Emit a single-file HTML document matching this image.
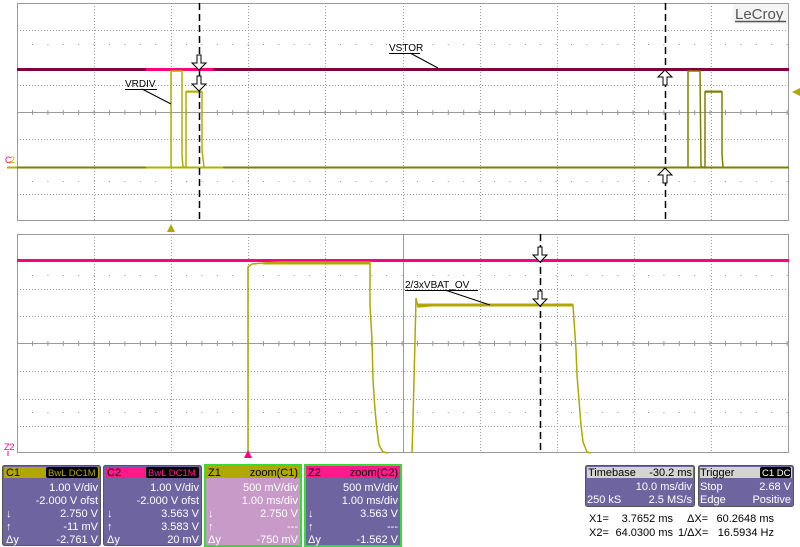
<!DOCTYPE html>
<html><head><style>
body{margin:0;background:#fff;width:800px;height:547px;overflow:hidden;font-family:"Liberation Sans",sans-serif}
svg{display:block}
text{font-family:"Liberation Sans",sans-serif}
</style></head><body>
<svg width="800" height="547" viewBox="0 0 800 547" xmlns="http://www.w3.org/2000/svg">
<!-- TOP GRID -->
<g stroke="#999" stroke-width="1" fill="none">
<rect x="17.5" y="3.5" width="771" height="217"/>
<line x1="17" y1="112.5" x2="789" y2="112.5"/>
<g stroke-dasharray="1,2">
<line x1="17" y1="30.5" x2="789" y2="30.5"/><line x1="17" y1="85.5" x2="789" y2="85.5"/>
<line x1="17" y1="139.5" x2="789" y2="139.5"/><line x1="17" y1="194.5" x2="789" y2="194.5"/>
<line x1="94.5" y1="3" x2="94.5" y2="221"/><line x1="171.5" y1="3" x2="171.5" y2="221"/>
<line x1="248.5" y1="3" x2="248.5" y2="221"/><line x1="325.5" y1="3" x2="325.5" y2="221"/>
<line x1="403.5" y1="3" x2="403.5" y2="221"/><line x1="480.5" y1="3" x2="480.5" y2="221"/>
<line x1="557.5" y1="3" x2="557.5" y2="221"/><line x1="634.5" y1="3" x2="634.5" y2="221"/>
<line x1="711.5" y1="3" x2="711.5" y2="221"/>
</g>
<g stroke-dasharray="1,14.4" stroke-dashoffset="-15">
<line x1="17" y1="44.5" x2="789" y2="44.5"/><line x1="17" y1="181.5" x2="789" y2="181.5"/>
<line x1="17" y1="112.5" x2="789" y2="112.5" stroke-width="5"/>
</g>
</g>
<!-- top traces -->
<line x1="17" y1="69.5" x2="789" y2="69.5" stroke="#800040" stroke-width="3"/>
<line x1="146" y1="69.5" x2="213" y2="69.5" stroke="#ff0080" stroke-width="3"/>
<line x1="17" y1="167.5" x2="789" y2="167.5" stroke="#808000" stroke-width="2"/>
<line x1="146" y1="167.5" x2="223" y2="167.5" stroke="#b0b000" stroke-width="2"/>
<polyline fill="none" stroke="#b0b000" stroke-width="1.5" points="171,167 171,71 182,71 182,156 183,167 186,167 186,92 202,92 202,150 204,167"/>
<polyline fill="none" stroke="#808000" stroke-width="1.5" points="688,167 688,71 700,71 701,167 705,167 705,92 722,92 722,155 723,167"/>
<line x1="186" y1="91.5" x2="202" y2="91.5" stroke="#b0b000" stroke-width="2"/>
<line x1="705" y1="91.5" x2="722" y2="91.5" stroke="#808000" stroke-width="2"/>
<line x1="7" y1="167.5" x2="17" y2="167.5" stroke="#b0b000" stroke-width="2"/>
<text x="5" y="163" font-size="9" fill="#ff0080">C</text><text x="10" y="163" font-size="9" fill="#b0b000">2</text>
<polygon points="792,92 800,88 800,96" fill="#b0a800"/>
<polygon points="167,232 171,224 175,232" fill="#b0a800"/>
<!-- cursors top -->
<g stroke="#000" stroke-width="1.5" stroke-dasharray="7,4">
<line x1="199.5" y1="3" x2="199.5" y2="221"/><line x1="665.5" y1="3" x2="665.5" y2="221"/>
</g>
<g fill="#fff" stroke="#000" stroke-width="1">
<path d="M197,55 h4 v8 h5 l-7,7 l-7,-7 h5z"/>
<path d="M197,76 h4 v8 h5 l-7,7 l-7,-7 h5z"/>
<path d="M663,85 h4 v-8 h5 l-7,-7 l-7,7 h5z"/>
<path d="M663,183 h4 v-8 h5 l-7,-7 l-7,7 h5z"/>
</g>
<text x="125" y="87" font-size="10">VRDIV</text>
<line x1="125" y1="89.5" x2="157" y2="89.5" stroke="#000"/>
<line x1="142" y1="89" x2="171" y2="104" stroke="#000"/>
<text x="389" y="51" font-size="10">VSTOR</text>
<line x1="389" y1="53.5" x2="420" y2="53.5" stroke="#000"/>
<line x1="410" y1="53" x2="438" y2="68" stroke="#000"/>
<rect x="733" y="4" width="55" height="20" fill="#f4f4f4"/>
<text x="735" y="19" font-size="15" fill="#555">LeCroy</text>
<line x1="735" y1="21.5" x2="786" y2="21.5" stroke="#555" stroke-width="1.5"/>

<!-- BOTTOM GRID -->
<g stroke="#999" stroke-width="1" fill="none">
<rect x="17.5" y="234.5" width="771" height="218"/>
<line x1="17" y1="343.5" x2="789" y2="343.5"/>
<line x1="403.5" y1="234" x2="403.5" y2="453"/>
<g stroke-dasharray="1,2">
<line x1="17" y1="289.5" x2="789" y2="289.5"/><line x1="17" y1="316.5" x2="789" y2="316.5"/>
<line x1="17" y1="371.5" x2="789" y2="371.5"/><line x1="17" y1="399.5" x2="789" y2="399.5"/>
<line x1="17" y1="426.5" x2="789" y2="426.5"/>
<line x1="94.5" y1="234" x2="94.5" y2="453"/><line x1="171.5" y1="234" x2="171.5" y2="453"/>
<line x1="248.5" y1="234" x2="248.5" y2="453"/><line x1="325.5" y1="234" x2="325.5" y2="453"/>
<line x1="480.5" y1="234" x2="480.5" y2="453"/>
<line x1="557.5" y1="234" x2="557.5" y2="453"/><line x1="634.5" y1="234" x2="634.5" y2="453"/>
<line x1="711.5" y1="234" x2="711.5" y2="453"/>
</g>
<g stroke-dasharray="1,14.4" stroke-dashoffset="-15">
<line x1="17" y1="275.5" x2="789" y2="275.5"/><line x1="17" y1="412.5" x2="789" y2="412.5"/>
<line x1="17" y1="343.5" x2="789" y2="343.5" stroke-width="5"/>
</g>
</g>
<line x1="17" y1="260.5" x2="789" y2="260.5" stroke="#ff0080" stroke-width="3"/>
<polyline fill="none" stroke="#b0a800" stroke-width="1.5" points="248,453 248,267 252,264 263,263 280,262 370,262 370,305 372,340 373,380 375,410 377,430 379,445 383,452 388,453"/>
<line x1="263" y1="263.5" x2="370" y2="263.5" stroke="#b0a800" stroke-width="2"/>
<polyline fill="none" stroke="#b0a800" stroke-width="1.5" points="412,453 413,420 414,380 415,340 416,298 418,307 440,305 573,305 574,320 576,350 577,375 579,400 581,425 583,442 587,452 591,453"/>
<line x1="418" y1="305" x2="573" y2="305" stroke="#b0a800" stroke-width="3"/>
<polygon points="244,458 248,450 252,458" fill="#ff0080"/>
<text x="4" y="450" font-size="9" fill="#ff0080">Z2</text>
<line x1="8" y1="451" x2="8" y2="456" stroke="#ff0080"/>
<line x1="540.5" y1="234" x2="540.5" y2="453" stroke="#000" stroke-width="1.5" stroke-dasharray="7,4"/>
<g fill="#fff" stroke="#000" stroke-width="1">
<path d="M538,247 h4 v8 h5 l-7,7 l-7,-7 h5z"/>
<path d="M538,291 h4 v8 h5 l-7,7 l-7,-7 h5z"/>
</g>
<text x="405" y="288" font-size="10">2/3xVBAT_OV</text>
<line x1="405" y1="290.5" x2="478" y2="290.5" stroke="#000"/>
<line x1="445" y1="290" x2="490" y2="305" stroke="#000"/>

<!-- INFO PANELS -->
<g font-size="11" fill="#fff">
<rect x="2.5" y="465.5" width="98" height="80" rx="2" fill="#6e65a0" stroke="#555"/>
<rect x="4" y="467" width="95" height="11" fill="#b0a800"/>
<text x="6" y="476" fill="#000">C1</text>
<rect x="46" y="467" width="52" height="11" rx="2" fill="#000"/>
<text x="48" y="476" fill="#b0a800" font-size="9.5">BwL DC1M</text>
<g text-anchor="end"><text x="98" y="491">1.00 V/div</text><text x="98" y="504">-2.000 V ofst</text><text x="98" y="517">2.750 V</text><text x="98" y="530">-11 mV</text><text x="98" y="543">-2.761 V</text></g>
<text x="6" y="517">↓</text><text x="6" y="530">↑</text><text x="6" y="543">Δy</text>
<rect x="103.5" y="465.5" width="98" height="80" rx="2" fill="#6e65a0" stroke="#555"/>
<rect x="105" y="467" width="95" height="11" fill="#ff1a8c"/>
<text x="107" y="476" fill="#000">C2</text>
<rect x="146" y="467" width="53" height="11" rx="2" fill="#000"/>
<text x="148" y="476" fill="#ff1a8c" font-size="9.5">BwL DC1M</text>
<g text-anchor="end"><text x="199" y="491">1.00 V/div</text><text x="199" y="504">-2.000 V ofst</text><text x="199" y="517">3.563 V</text><text x="199" y="530">3.583 V</text><text x="199" y="543">20 mV</text></g>
<text x="107" y="517">↓</text><text x="107" y="530">↑</text><text x="107" y="543">Δy</text>
<rect x="205" y="465" width="96" height="81" fill="#c79ac8" stroke="#33dd33" stroke-width="2"/>
<rect x="206" y="466" width="94" height="12" fill="#b0a800"/>
<text x="208" y="476" fill="#000">Z1</text><text x="298" y="476" fill="#000" text-anchor="end">zoom(C1)</text>
<g text-anchor="end"><text x="298" y="491">500 mV/div</text><text x="298" y="504">1.00 ms/div</text><text x="298" y="517">2.750 V</text><text x="298" y="530">---</text><text x="298" y="543">-750 mV</text></g>
<text x="208" y="517">↓</text><text x="208" y="530">↑</text><text x="208" y="543">Δy</text>
<rect x="305" y="465" width="96" height="81" fill="#6e65a0" stroke="#33dd33" stroke-width="2"/>
<rect x="306" y="466" width="94" height="12" fill="#ff1a8c"/>
<text x="308" y="476" fill="#000">Z2</text><text x="398" y="476" fill="#000" text-anchor="end">zoom(C2)</text>
<g text-anchor="end"><text x="398" y="491">500 mV/div</text><text x="398" y="504">1.00 ms/div</text><text x="398" y="517">3.563 V</text><text x="398" y="530">---</text><text x="398" y="543">-1.562 V</text></g>
<text x="308" y="517">↓</text><text x="308" y="530">↑</text><text x="308" y="543">Δy</text>
<rect x="585.5" y="465.5" width="109" height="41" rx="2" fill="#6e65a0" stroke="#555"/>
<rect x="587" y="467" width="106" height="11" fill="#d4d4d4"/>
<text x="588" y="476" fill="#000">Timebase</text><text x="692" y="476" fill="#000" text-anchor="end">-30.2 ms</text>
<text x="692" y="490" text-anchor="end">10.0 ms/div</text>
<text x="587" y="503">250 kS</text><text x="692" y="503" text-anchor="end">2.5 MS/s</text>
<rect x="698.5" y="465.5" width="95" height="41" rx="2" fill="#6e65a0" stroke="#555"/>
<rect x="700" y="467" width="92" height="11" fill="#d4d4d4"/>
<text x="700" y="476" fill="#000">Trigger</text>
<rect x="760" y="467" width="31" height="11" rx="2" fill="#000"/>
<text x="762" y="476" font-size="9.5">C1 DC</text>
<text x="700" y="490">Stop</text><text x="791" y="490" text-anchor="end">2.68 V</text>
<text x="700" y="503">Edge</text><text x="791" y="503" text-anchor="end">Positive</text>
</g>
<g font-size="11" fill="#000">
<text x="589" y="522">X1=</text><text x="673" y="522" text-anchor="end">3.7652 ms</text>
<text x="687" y="522">ΔX=</text><text x="774" y="522" text-anchor="end">60.2648 ms</text>
<text x="589" y="536">X2=</text><text x="673" y="536" text-anchor="end">64.0300 ms</text>
<text x="678" y="536">1/ΔX=</text><text x="774" y="536" text-anchor="end">16.5934 Hz</text>
</g>
</svg>
</body></html>
